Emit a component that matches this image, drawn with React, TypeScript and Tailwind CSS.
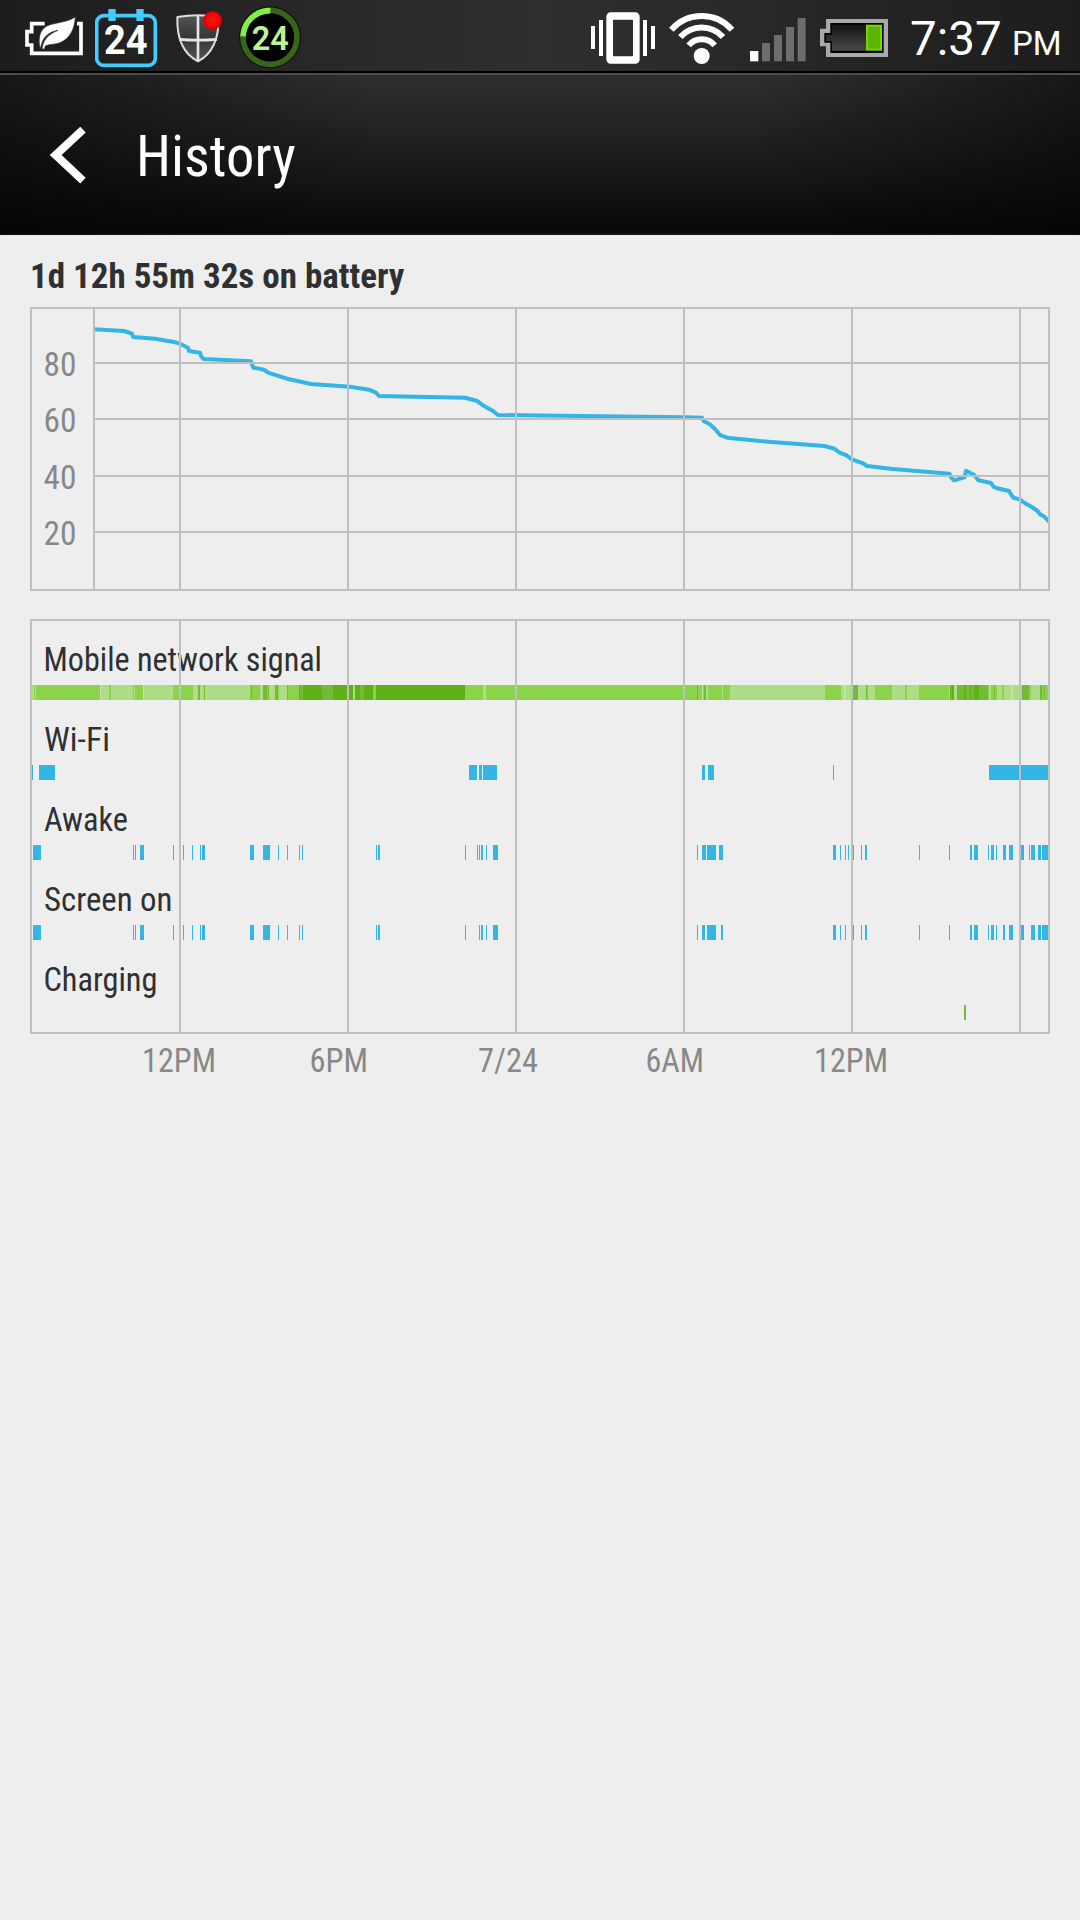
type Span = [number, number];

const LINE_COLOR = '#bfbfbf';
const BLUE = '#33b5e6';
const HOURS = [180, 348, 516, 684, 852, 1020];

const LEVEL: Record<string, string> = {
  a: '#c2e4a6',
  b: '#aedc87',
  c: '#8ad34a',
  d: '#74ba36',
  e: '#5fb117',
};

const SIGNAL_START = 32;
// Each entry: level followed by the x at which that level ends.
const SIGNAL =
  'b34 c35 b36 c100 a101 b109 c111 b133 c134 b135 c143 a144 b173 c193 b198 d200 b204 d205 b250 c251 d252 c260 b263 d267 c268 d269 b275 d278 c279 b287 d288 c299 e300 d303 e322 d333 e353 b355 e360 d364 e373 c376 e465 c483 b486 c697 d698 c702 a703 c704 d706 b708 c722 b723 c730 b825 c841 b844 a846 b853 d858 b866 d867 c868 b875 c892 b905 c907 b919 c949 b950 e951 d952 e954 b957 d964 e966 d970 e971 d974 e979 d988 c989 b991 c994 d995 c997 b1002 c1004 b1011 a1013 b1022 d1029 c1031 b1040 d1042 c1044 d1045 c1048'
    .split(' ')
    .map((s) => ({ level: s[0], end: Number(s.slice(1)) }));

const WIFI: Span[] = [
  [32, 33], [39, 55], [469, 477], [479, 482], [483, 497], [702, 705], [708, 714], [833, 834], [989, 1048],
];

const AWAKE: Span[] = [
  [33, 41], [133, 134], [135, 136], [140, 144], [173, 174], [183, 184], [192, 193], [200, 201], [202, 205],
  [250, 254], [263, 270], [278, 279], [287, 288], [299, 300], [302, 303], [376, 377], [378, 380], [465, 466],
  [477, 478], [479, 480], [481, 483], [486, 487], [493, 498], [697, 698], [702, 706], [707, 716], [719, 723],
  [833, 836], [840, 841], [845, 846], [848, 849], [853, 854], [861, 862], [865, 867], [919, 920], [949, 950],
  [970, 972], [974, 978], [988, 989], [991, 994], [996, 997], [1003, 1006], [1009, 1013], [1021, 1024],
  [1029, 1030], [1031, 1035], [1038, 1041], [1042, 1048],
];

const SCREEN_ON: Span[] = [
  [33, 41], [133, 134], [135, 136], [140, 144], [173, 174], [183, 184], [192, 193], [200, 201], [202, 205],
  [250, 254], [263, 270], [278, 279], [287, 288], [299, 300], [302, 303], [376, 377], [378, 380], [465, 466],
  [479, 480], [481, 483], [486, 487], [493, 498], [697, 698], [702, 705], [707, 716], [721, 723],
  [833, 836], [840, 841], [845, 846], [853, 854], [861, 862], [865, 867], [919, 920], [949, 950],
  [970, 972], [974, 978], [988, 989], [991, 994], [996, 997], [1003, 1005], [1009, 1013], [1021, 1024],
  [1031, 1035], [1038, 1041], [1042, 1048],
];

const BATTERY_LINE =
  '94,329.3 124,331 132,333.7 133,337 155,338.7 174,342 180,343.7 188,347.7 189,351 200,352.7 201,356 203.6,359 251,361.3 252,364.7 253.6,367.7 264,369.7 268,372.7 287,378.7 311,384 350,386.7 369,389.7 376,392.7 379,396 465,397.7 476.5,400.7 484,406 493,411 498,415 540,415.5 685,417.3 702,417.7 703.6,421 709.4,424 715,429 720,435 727,437.7 760,441 824.5,446 834.5,448.7 839,452.3 846.5,455.3 852,459.3 863.7,463.7 867,466 893,469 949.5,473.7 951,477.3 954,480.3 964.6,477.3 966,470.7 974,474.7 978.4,480.3 991,483 993.5,486.7 996.3,488 1009,491 1013,497.5 1020.4,499.7 1023.5,502.3 1031.7,507 1037.6,511 1040,514.3 1044.5,516.7 1049,521.8';

function Label({ x, y, w, fill, children }: { x: number; y: number; w: number; fill: string; children: string }) {
  return (
    <text x={x} y={y} textLength={w} lengthAdjust="spacingAndGlyphs" fill={fill}
      className="font-['Roboto_Condensed','Roboto',sans-serif] text-[34px]">
      {children}
    </text>
  );
}

function Spans({ spans, y, color }: { spans: Span[]; y: number; color: string }) {
  return (
    <g fill={color}>
      {spans.map(([a, b]) => <rect key={a} x={a} y={y} width={b - a} height={15} />)}
    </g>
  );
}

function BatteryLevelChart() {
  return (
    <svg className="block h-[284px] w-[1020px]" viewBox="30 307 1020 284">
      <polyline points={BATTERY_LINE} fill="none" stroke={BLUE} strokeWidth="4" strokeLinejoin="round" />
      <g stroke={LINE_COLOR} strokeWidth="2" fill="none">
        <rect x="31" y="308" width="1018" height="282" />
        <path d="M94 308V590M94 363H1049M94 419H1049M94 476H1049M94 532H1049" />
        {HOURS.map((x) => <path key={x} d={`M${x} 308V590`} />)}
      </g>
      <Label x={43.5} y={376} w={33} fill="#888888">80</Label>
      <Label x={43.5} y={432} w={33} fill="#888888">60</Label>
      <Label x={43.5} y={489} w={33} fill="#888888">40</Label>
      <Label x={43.5} y={545} w={33} fill="#888888">20</Label>
    </svg>
  );
}

function TimelineChart() {
  return (
    <svg className="block h-[471px] w-[1020px]" viewBox="30 619 1020 471">
      <Label x={43.5} y={671} w={278.5} fill="#2f3031">Mobile network signal</Label>
      <Label x={44} y={751} w={66} fill="#2f3031">Wi-Fi</Label>
      <Label x={44} y={831} w={84} fill="#2f3031">Awake</Label>
      <Label x={44} y={911} w={128.5} fill="#2f3031">Screen on</Label>
      <Label x={43.5} y={991} w={114} fill="#2f3031">Charging</Label>
      {SIGNAL.map(({ level, end }, i) => {
        const start = i === 0 ? SIGNAL_START : SIGNAL[i - 1].end;
        return <rect key={end} x={start} y={685} width={end - start} height={15} fill={LEVEL[level]} shapeRendering="crispEdges" />;
      })}
      <Spans spans={WIFI} y={765} color={BLUE} />
      <Spans spans={AWAKE} y={845} color={BLUE} />
      <Spans spans={SCREEN_ON} y={925} color={BLUE} />
      <Spans spans={[[964, 966]]} y={1005} color="#74ba36" />
      <g stroke={LINE_COLOR} strokeWidth="2" fill="none">
        <rect x="31" y="620" width="1018" height="413" />
        {HOURS.map((x) => <path key={x} d={`M${x} 620V1033`} />)}
      </g>
      <Label x={142} y={1072} w={74} fill="#888888">12PM</Label>
      <Label x={309.5} y={1072} w={58.5} fill="#888888">6PM</Label>
      <Label x={478} y={1072} w={60} fill="#888888">7/24</Label>
      <Label x={645.5} y={1072} w={58.5} fill="#888888">6AM</Label>
      <Label x={814} y={1072} w={74} fill="#888888">12PM</Label>
    </svg>
  );
}

function EcoBatteryIcon() {
  return (
    <svg className="h-[71px] w-[58px]" viewBox="75 0 174 213">
      <path d="M134 71H95V95H81V135H95V160H243V71H231" fill="none" stroke="#fff" strokeWidth="11" />
      <path d="M121 148C112 112 120 84 150 74C180 67 206 64 226 51C224 84 212 116 178 129C160 134 146 133 136 138L133 148L126 146C129 121 144 103 174 91C144 97 127 111 121 148Z" fill="#fff" stroke="#2a2a2a" strokeWidth="2" />
    </svg>
  );
}

function CalendarIcon() {
  return (
    <svg className="ml-3 h-[71px] w-[63px]" viewBox="285 0 189 213">
      <rect x="290" y="47" width="176" height="149" rx="21" fill="none" stroke="#43ccff" strokeWidth="11" />
      <path d="M325 27h22v36h-22zM409 27h22v36h-22z" fill="#43ccff" />
      <text x="312" y="163" textLength="131" lengthAdjust="spacingAndGlyphs" fill="#fff" className="font-['Roboto',sans-serif] text-[123px] font-bold">24</text>
    </svg>
  );
}

function ShieldIcon() {
  return (
    <svg className="ml-[17px] h-[71px] w-[49px]" viewBox="525 0 147 213">
      <defs>
        <linearGradient id="shield" x1="0" y1="0" x2="0" y2="1">
          <stop offset="0" stopColor="#565656" />
          <stop offset="0.5" stopColor="#353535" />
          <stop offset="1" stopColor="#555" />
        </linearGradient>
        <radialGradient id="dot">
          <stop offset="0" stopColor="#ff1414" />
          <stop offset="0.75" stopColor="#ee0606" />
          <stop offset="1" stopColor="#c80000" />
        </radialGradient>
      </defs>
      <path d="M532 51Q594 40 656 51C657 118 639 161 594 184C549 161 530 118 532 51Z" fill="url(#shield)" stroke="#dedede" strokeWidth="6" strokeLinejoin="round" />
      <path d="M594 47V184M538 118Q594 123 651 118" fill="none" stroke="#e4e4e4" strokeWidth="8" />
      <circle cx="638" cy="61" r="28" fill="url(#dot)" />
    </svg>
  );
}

function BatteryRingIcon() {
  return (
    <svg className="ml-[15px] h-[71px] w-[62px]" viewBox="717 0 186 213">
      <circle cx="810" cy="112" r="93" fill="#0b1504" />
      <circle cx="810" cy="112" r="81" fill="#000" stroke="#3b641b" strokeWidth="17" />
      <path d="M729 109A81 81 0 0 1 811 32" fill="none" stroke="#84f03f" strokeWidth="17" />
      <text x="755" y="151" textLength="111" lengthAdjust="spacingAndGlyphs" fill="#b9f596" className="font-['Roboto',sans-serif] text-[101px] font-semibold">24</text>
    </svg>
  );
}

function VibrateIcon() {
  return (
    <svg className="h-[71px] w-[64px]" viewBox="33 0 192 213">
      <rect x="90" y="48" width="78" height="132" rx="2" fill="none" stroke="#fff" strokeWidth="22" strokeLinejoin="round" />
      <rect x="99" y="60" width="60" height="108" fill="#2e2e2e" />
      <path d="M33 78h12v69H33zM57 60h12v108H57zM189 60h12v108h-12zM213 78h12v69h-12z" fill="#fff" />
    </svg>
  );
}

function WifiIcon() {
  return (
    <svg className="ml-[14px] h-[71px] w-[65px]" viewBox="268 0 195 213">
      <circle cx="366" cy="168" r="24" fill="#fff" />
      <g fill="none" stroke="#fff" strokeWidth="18">
        <path d="M327 136A51 51 0 0 1 405 136" />
        <path d="M302 111A86 86 0 0 1 430 111" />
        <path d="M275 89A121 121 0 0 1 457 89" />
      </g>
    </svg>
  );
}

function CellSignalIcon() {
  return (
    <svg className="ml-4 h-[71px] w-[56px]" viewBox="510 0 168 213">
      <path d="M510 153h25v31h-25z" fill="#fff" />
      <path d="M546 129h24v55h-24zM582 105h24v79h-24zM618 81h24v103h-24zM653 54h24v130h-24z" fill="#6d6d6d" />
    </svg>
  );
}

function BatteryIcon() {
  return (
    <svg className="ml-[14px] h-[71px] w-[68px]" viewBox="720 0 204 213">
      <defs>
        <linearGradient id="cell" x1="0" y1="0" x2="0" y2="1">
          <stop offset="0" stopColor="#141414" />
          <stop offset="1" stopColor="#484848" />
        </linearGradient>
      </defs>
      <path d="M738 57H924V171H738V139H720V86H738Z" fill="#a9a9a9" />
      <path d="M751 69H911V159H751V128H733V99H751Z" fill="#000" />
      <path d="M756 74H858V152H756V123H738V104H756Z" fill="url(#cell)" />
      <path d="M858 74h48v78h-48z" fill="#73d808" />
      <path d="M864 80h36v66h-36z" fill="#5db500" />
    </svg>
  );
}

export default function App() {
  return (
    <div className="flex min-h-[1920px] w-[1080px] flex-col bg-[#eeeeee] font-['Roboto',sans-serif]">
      <div className="flex h-[71px] items-center bg-[linear-gradient(90deg,#1d1d1d_0%,#2f2f2f_50%,#1d1d1d_100%)] pl-[25px]">
        <EcoBatteryIcon />
        <CalendarIcon />
        <ShieldIcon />
        <BatteryRingIcon />
        <div className="ml-[290px] flex items-center">
          <VibrateIcon />
          <WifiIcon />
          <CellSignalIcon />
          <BatteryIcon />
          <div className="ml-[22px] flex items-baseline whitespace-nowrap pt-[7px] text-white">
            <span className="w-[102px] text-[47.5px] leading-[56px]">7:37</span>
            <span className="text-[33px] leading-10">PM</span>
          </div>
        </div>
      </div>
      <header className="flex h-[164px] items-center border-t-2 border-black bg-[linear-gradient(90deg,rgba(0,0,0,0.5)_0%,rgba(0,0,0,0)_35%,rgba(0,0,0,0)_70%,rgba(0,0,0,0.5)_100%),linear-gradient(180deg,#2f2f2f_0%,#242424_30%,#171717_65%,#080909_97%,#080909_98.7%,#1a1515_98.8%)]">
        <div className="h-full w-full border-t-2 border-[#4b4b4b]">
          <div className="flex h-full items-center pt-0.5 pl-[50px]">
            <svg className="h-[58px] w-[36px]" viewBox="150 170 108 174">
              <path d="M249 178L167 254L249 331" fill="none" stroke="#fff" strokeWidth="24" />
            </svg>
            <h1 className="ml-[50px] origin-left scale-x-[0.975] text-[58px] leading-[68px] whitespace-nowrap text-white [font-family:'Roboto_Condensed','Roboto',sans-serif] [font-weight:450]">
              History
            </h1>
          </div>
        </div>
      </header>
      <main className="px-[30px] pt-5">
        <h2 className="origin-left scale-x-[0.985] text-[35.5px] leading-[43px] font-bold whitespace-nowrap text-[#2f3031] [font-family:'Roboto_Condensed','Roboto',sans-serif]">
          1d 12h 55m 32s on battery
        </h2>
        <div className="mt-[9px]">
          <BatteryLevelChart />
        </div>
        <div className="mt-7">
          <TimelineChart />
        </div>
      </main>
    </div>
  );
}
